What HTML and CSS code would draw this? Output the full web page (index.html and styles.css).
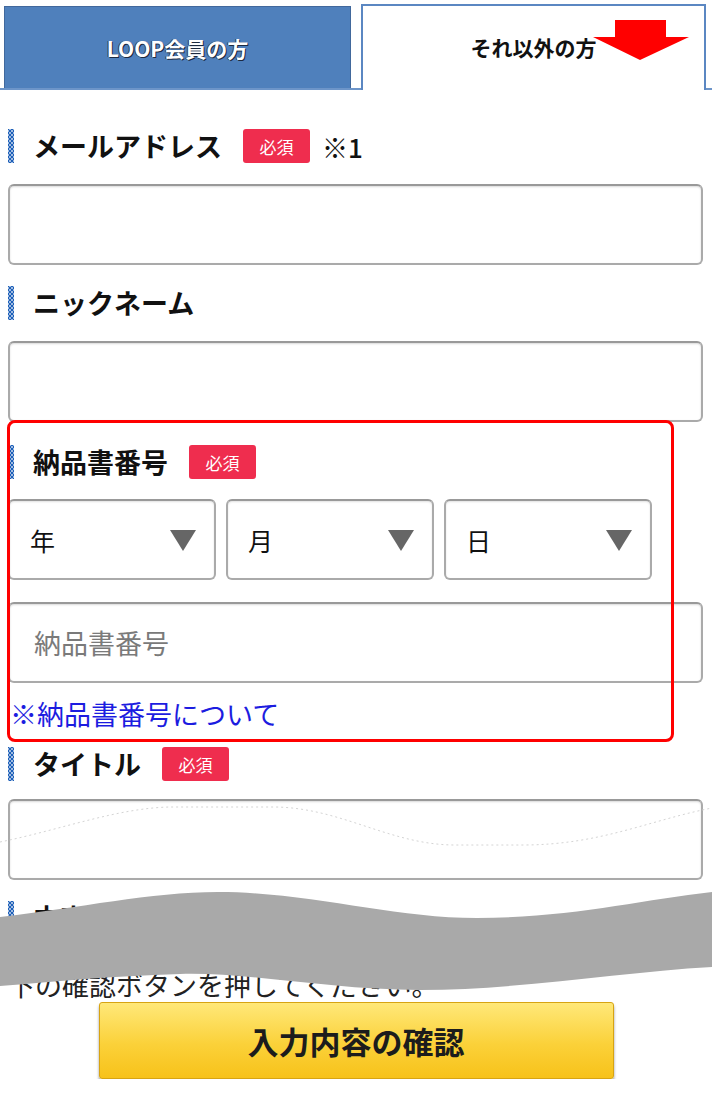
FILE: index.html
```html
<!DOCTYPE html>
<html lang="ja">
<head>
  <meta charset="UTF-8">
  <meta name="viewport" content="width=device-width, initial-scale=1.0">
  <title>お問い合わせフォーム</title>
  <link rel="stylesheet" href="styles.css">
</head>
<body>
  <!-- Member type tabs -->
  <div class="tabs">
    <div class="tab tab-member">LOOP会員の方</div>
    <div class="tab tab-other">それ以外の方</div>
  </div>

  <form class="form">
    <div class="label-row first">
      <span class="dots"></span>
      <span class="label">メールアドレス</span>
      <span class="badge">必須</span>
      <span class="note-mark">※1</span>
    </div>
    <input class="text-input" type="text">

    <div class="label-row">
      <span class="dots"></span>
      <span class="label">ニックネーム</span>
    </div>
    <input class="text-input" type="text">

    <div class="label-row invoice">
      <span class="dots"></span>
      <span class="label">納品書番号</span>
      <span class="badge">必須</span>
    </div>
    <div class="date-selects">
      <label class="select-box"><select><option>年</option></select></label>
      <label class="select-box"><select><option>月</option></select></label>
      <label class="select-box"><select><option>日</option></select></label>
    </div>
    <input class="text-input invoice-input" type="text" placeholder="納品書番号">
    <a class="help-link" href="#">※納品書番号について</a>

    <div class="label-row title-row">
      <span class="dots"></span>
      <span class="label">タイトル</span>
      <span class="badge">必須</span>
    </div>
    <input class="text-input title-input" type="text">

    <div class="label-row hidden-row">
      <span class="dots"></span>
      <span class="label">内容</span>
    </div>
    <a class="help-link hidden-link" href="#">※ご入力内容をご確認ください</a>
    <p class="submit-note">下の確認ボタンを押してください。</p>

    <div class="submit-wrap">
      <button class="submit-button" type="button">入力内容の確認</button>
    </div>
  </form>

  <!-- Annotations drawn over the screenshot -->
  <div class="highlight-box"></div>

  <svg class="arrow" width="104" height="46" viewBox="0 0 104 46">
    <polygon points="25,2 76,2 76,19 99,19 50,42 3,19 25,19" fill="#ff0000"/>
  </svg>

  <svg class="torn" width="712" height="200" viewBox="0 0 712 200">
    <path d="M0,42 C60,30 120,7 173,7 L273,7 C340,7 390,45 455,45 L523,45 C600,45 650,20 712,8" fill="none" stroke="#d4d4d4" stroke-width="1" stroke-dasharray="2 3"/>
    <path d="M0,117 C80,108 150,92 218,92 C310,92 390,118 477,118 C570,118 640,100 712,92 L712,167 C620,172 520,190 420,190 C330,190 250,172 180,174 C110,176 50,182 0,186 Z" fill="#a9a9a9"/>
  </svg>
</body>
</html>
```

FILE: styles.css
```css
/* Basic reset */
* {
  margin: 0;
  padding: 0;
  box-sizing: border-box;
}

body {
  position: relative;
  width: 712px;
  background: #ffffff;
  font-family: "Noto Sans CJK JP", "Noto Sans", sans-serif;
  color: #111111;
}

/* Tabs */
.tabs {
  display: flex;
  align-items: flex-end;
  gap: 10px;
  padding: 4px 6px 0 4px;
  border-bottom: 2px solid #6d95c9;
}

.tab {
  display: flex;
  align-items: center;
  justify-content: center;
  font-size: 21px;
  font-weight: bold;
}

.tab-member {
  width: 347px;
  height: 82px;
  background: #4f80bc;
  border: 1px solid #41689c;
  border-bottom: none;
  color: #ffffff;
  text-shadow: 1px 1px 0 #1c2a40, -1px 0 0 #2a3d5c;
}

.tab-other {
  width: 345px;
  height: 86px;
  margin-bottom: -2px;
  background: #ffffff;
  border: 2px solid #5b87c2;
  border-bottom: none;
  color: #111111;
  padding-bottom: 2px;
}

/* Form */
.form {
  padding: 0 9px 0 8px;
}

.label-row {
  display: flex;
  align-items: center;
  height: 36px;
  margin-top: 20px;
}

.label-row.first {
  margin-top: 38px;
}

.label-row.invoice {
  margin-top: 22px;
}

.label-row.title-row {
  margin-top: 17px;
}

.dots {
  width: 6px;
  height: 34px;
  margin-right: 19px;
  background-image:
    radial-gradient(circle, #1d5fb8 1.2px, transparent 1.7px),
    radial-gradient(circle, #1d5fb8 1.2px, transparent 1.7px);
  background-size: 4px 4px;
  background-position: 0 0, 2px 2px;
}

.label {
  font-size: 27px;
  font-weight: bold;
  line-height: 36px;
  color: #111111;
}

.badge {
  display: inline-flex;
  align-items: center;
  justify-content: center;
  width: 67px;
  height: 34px;
  margin-left: 21px;
  background: #ef2d4e;
  border-radius: 3px;
  color: #ffffff;
  font-size: 17px;
}

.note-mark {
  margin-left: 12px;
  font-size: 26px;
  font-weight: 500;
}

.text-input {
  display: block;
  width: 100%;
  height: 81px;
  margin-top: 20px;
  padding: 0 24px;
  border: 2px solid #aaaaaa;
  border-top-color: #999999;
  border-radius: 6px;
  box-shadow: inset 0 1px 2px rgba(0, 0, 0, 0.15);
  font-family: inherit;
  font-size: 27px;
  background: #ffffff;
}

.text-input::placeholder {
  color: #7a7a7a;
}

.invoice-input {
  margin-top: 22px;
}

.title-input {
  margin-top: 17px;
}

/* Date selects */
.date-selects {
  display: flex;
  gap: 10px;
  margin-top: 19px;
}

.select-box {
  position: relative;
  width: 208px;
  height: 81px;
}

.select-box::after {
  content: "";
  position: absolute;
  right: 20px;
  top: 31px;
  border-left: 13px solid transparent;
  border-right: 13px solid transparent;
  border-top: 21px solid #666666;
}

.select-box select {
  appearance: none;
  width: 100%;
  height: 100%;
  padding-left: 20px;
  border: 2px solid #aaaaaa;
  border-top-color: #999999;
  border-radius: 6px;
  box-shadow: inset 0 1px 2px rgba(0, 0, 0, 0.12);
  background: #ffffff;
  font-family: inherit;
  font-size: 25px;
  color: #111111;
}

.help-link {
  display: block;
  margin-top: 16px;
  padding-left: 2px;
  font-size: 27px;
  line-height: 30px;
  color: #1c1ce0;
  text-decoration: none;
}

.hidden-link {
  margin-top: 0;
  padding-left: 170px;
  font-size: 20px;
  line-height: 24px;
}

.submit-note {
  margin-top: 10px;
  font-size: 27px;
  line-height: 30px;
  color: #222222;
}

.submit-wrap {
  display: flex;
  justify-content: center;
  padding-left: 1px;
  margin-top: 2px;
}

.submit-button {
  width: 515px;
  height: 77px;
  border: 1px solid #d7a413;
  border-radius: 3px;
  background: linear-gradient(#ffe879, #fbd139 55%, #f7c21a);
  box-shadow: 0 3px 3px rgba(0, 0, 0, 0.4);
  font-family: inherit;
  font-size: 31px;
  font-weight: bold;
  color: #1c1c1c;
  cursor: pointer;
}

/* Overlays */
.highlight-box {
  position: absolute;
  left: 7px;
  top: 420px;
  width: 667px;
  height: 322px;
  border: 3px solid #ff0000;
  border-radius: 8px;
  pointer-events: none;
}

.arrow {
  position: absolute;
  left: 590px;
  top: 18px;
}

.torn {
  position: absolute;
  left: 0;
  top: 800px;
}
```
